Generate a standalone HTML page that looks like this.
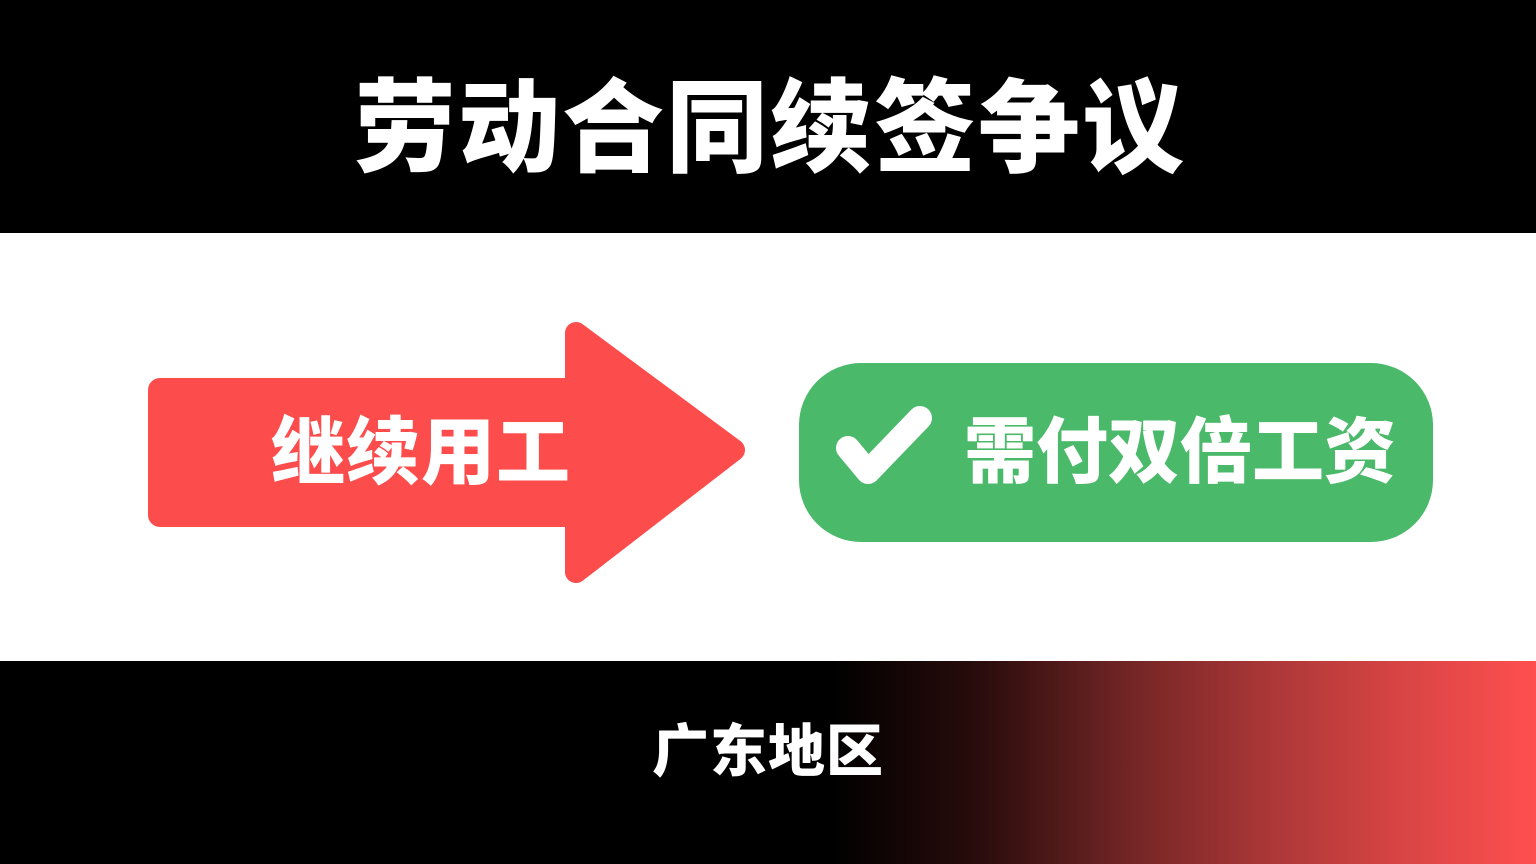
<!DOCTYPE html>
<html><head><meta charset="utf-8"><style>
*{margin:0;padding:0;box-sizing:border-box}
body{width:1536px;height:864px;overflow:hidden;background:#fff;position:relative;font-family:"Liberation Sans","Noto Sans CJK SC",sans-serif;font-weight:900}
.top{position:absolute;left:0;top:0;width:1536px;height:233px;background:#000}
.bot{position:absolute;left:0;top:661px;width:1536px;height:203px;background:linear-gradient(90deg,#000 0,#000 830px,#2a0c0c 980px,#6a2222 1110px,#a83636 1260px,#d84444 1400px,#ff4f4f 1536px)}
.t{position:absolute;color:#fff;white-space:nowrap;font-weight:900}
</style></head><body>
<div class="top"></div>
<div class="t" style="left:354px;top:64px;font-size:102px;letter-spacing:2px;line-height:130px">劳动合同续签争议</div>
<svg style="position:absolute;left:0;top:0" width="1536" height="864">
<rect x="148" y="378" width="440" height="149" rx="12" fill="#fd4c4c"/>
<path d="M576 333 L734 450 L576 572 Z" fill="#fd4c4c" stroke="#fd4c4c" stroke-width="22" stroke-linejoin="round"/>
<rect x="799" y="363" width="634" height="179" rx="62" fill="#4bb96a"/>
<path d="M848 448 L868 472 L920 418" fill="none" stroke="#fff" stroke-width="24" stroke-linecap="round" stroke-linejoin="round"/>
</svg>
<div class="t" style="left:271px;top:405px;font-size:74px;letter-spacing:1px;line-height:95px">继续用工</div>
<div class="t" style="left:964px;top:408px;font-size:72px;line-height:90px">需付双倍工资</div>
<div class="bot"></div>
<div class="t" style="left:652px;top:716px;font-size:57px;letter-spacing:1px;line-height:72px">广东地区</div>
</body></html>
